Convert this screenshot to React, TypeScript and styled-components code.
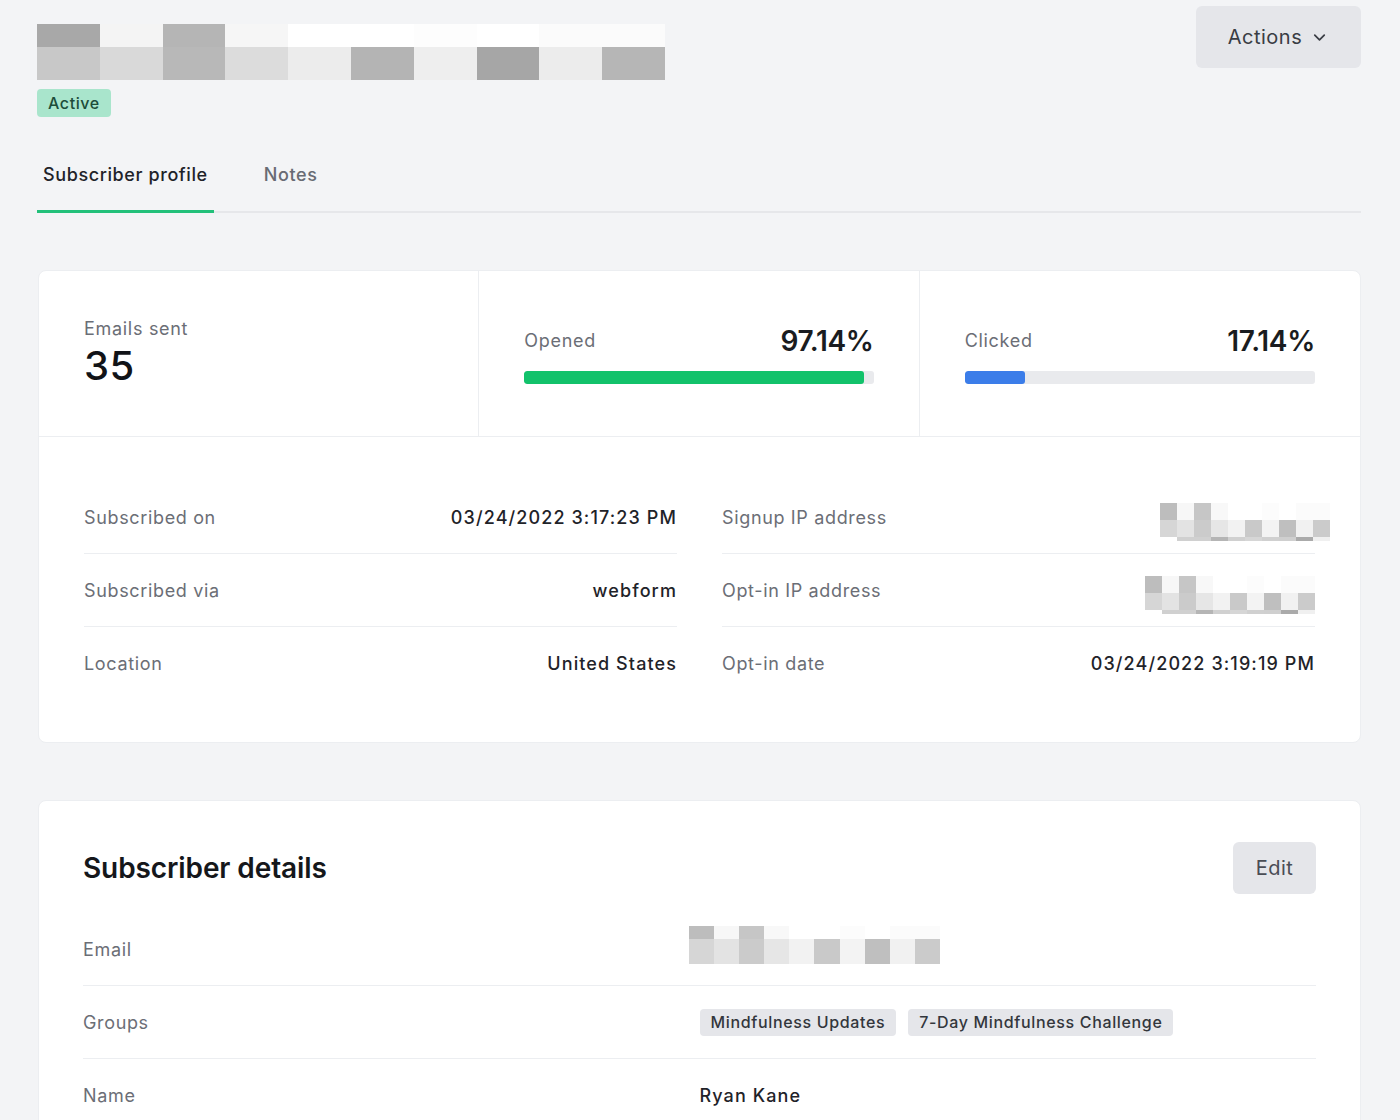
import styled, { createGlobalStyle } from 'styled-components';

const GlobalStyle = createGlobalStyle`
  html, body {
    margin: 0;
    padding: 0;
    background: #f3f4f6;
    overflow: hidden;
  }
  body {
    font-family: Inter, "Noto Sans", "Liberation Sans", sans-serif;
    color: #1f2329;
  }
  * {
    box-sizing: border-box;
  }
`;

const Page = styled.div`
  padding: 6px 39px 0 37px;
`;

const Header = styled.div`
  display: flex;
  justify-content: space-between;
  align-items: flex-start;
`;

const HeaderLeft = styled.div`
  display: flex;
  flex-direction: column;
  align-items: flex-start;
  padding-top: 18px;
`;

const PixelGrid = styled.div<{ $cols: number; $cell: number; $rows: string }>`
  display: grid;
  grid-template-columns: repeat(${(p) => p.$cols}, ${(p) => p.$cell}px);
  grid-template-rows: ${(p) => p.$rows};
`;

const Pixel = styled.div<{ $c: string }>`
  background: ${(p) => p.$c};
`;

const Badge = styled.div`
  margin-top: 9px;
  background: #a9e5cc;
  color: #1d4d3a;
  font-size: 16px;
  font-weight: 500;
  line-height: 28px;
  padding: 0 11px;
  border-radius: 4px;
  letter-spacing: 0.6px;
`;

const ActionsButton = styled.button`
  display: flex;
  align-items: center;
  gap: 8px;
  height: 62px;
  width: 165px;
  justify-content: center;
  background: #e5e6ea;
  border: none;
  border-radius: 6px;
  font-family: inherit;
  font-size: 20px;
  letter-spacing: 0.5px;
  color: #3a3d44;
  cursor: pointer;
`;

const TabBar = styled.div`
  display: flex;
  gap: 44px;
  margin-top: 33px;
  border-bottom: 2px solid #e6e7ea;
`;

const Tab = styled.div<{ $active?: boolean }>`
  padding: 14px 6px 24px;
  font-size: 18px;
  line-height: 22px;
  font-weight: 500;
  letter-spacing: 0.6px;
  color: ${(p) => (p.$active ? '#1f2329' : '#686b73')};
  border-bottom: 3px solid ${(p) => (p.$active ? '#22c07a' : 'transparent')};
  margin-bottom: -2px;
`;

const Card = styled.div<{ $top: number }>`
  margin-top: ${(p) => p.$top}px;
  margin-left: 1px;
  background: #fff;
  border-radius: 8px;
  border: 1px solid #eceef1;
`;

const StatsRow = styled.div`
  display: grid;
  grid-template-columns: repeat(3, 1fr);
  height: 166px;
  border-bottom: 1px solid #eceef1;
`;

const StatCell = styled.div`
  display: flex;
  flex-direction: column;
  justify-content: center;
  padding: 0 45px;
  border-right: 1px solid #eceef1;
  &:last-child {
    border-right: none;
  }
`;

const StatLabel = styled.div`
  font-size: 18px;
  line-height: 22px;
  letter-spacing: 0.7px;
  color: #6b6e76;
`;

const BigNumber = styled.div`
  margin-top: 3px;
  font-size: 40px;
  line-height: 46px;
  font-weight: 500;
  letter-spacing: 0.5px;
  color: #111317;
`;

const RateTop = styled.div`
  display: flex;
  justify-content: space-between;
  align-items: center;
  height: 34px;
`;

const RateValue = styled.div`
  font-size: 28px;
  font-weight: 600;
  color: #1a1c20;
  letter-spacing: -0.3px;
`;

const Track = styled.div`
  margin-top: 13px;
  height: 13px;
  background: #e9eaed;
  border-radius: 3px;
  overflow: hidden;
`;

const Fill = styled.div<{ $color: string }>`
  height: 100%;
  background: ${(p) => p.$color};
  border-radius: 3px;
`;

const InfoSection = styled.div`
  display: grid;
  grid-template-columns: 1fr 1fr;
  gap: 45px;
  padding: 44px 45px 43px;
`;

const InfoList = styled.div`
  display: flex;
  flex-direction: column;
`;

const InfoRow = styled.div`
  display: flex;
  justify-content: space-between;
  align-items: center;
  height: 73px;
  border-bottom: 1px solid #eceef1;
  &:last-child {
    border-bottom: none;
    height: 72px;
  }
`;

const Label = styled.div`
  font-size: 18px;
  letter-spacing: 0.65px;
  color: #6b6e76;
`;

const Value = styled.div`
  font-size: 18px;
  font-weight: 500;
  color: #1f2329;
  letter-spacing: 1.1px;
`;

const DetailsCard = styled(Card)`
  padding: 41px 44px 0;
  border-bottom-left-radius: 0;
  border-bottom-right-radius: 0;
  min-height: 340px;
`;

const DetailsHeader = styled.div`
  display: flex;
  justify-content: space-between;
  align-items: center;
  margin-bottom: 19px;
`;

const Heading = styled.h2`
  margin: 0;
  font-size: 28px;
  font-weight: 600;
  letter-spacing: -0.1px;
  color: #15171b;
`;

const EditButton = styled.button`
  height: 52px;
  width: 83px;
  background: #e5e6ea;
  border: none;
  border-radius: 6px;
  font-family: inherit;
  font-size: 20px;
  letter-spacing: 0.4px;
  color: #4a4d55;
`;

const DetailRow = styled.div`
  display: grid;
  grid-template-columns: 1fr 1fr;
  align-items: center;
  height: 73px;
  border-bottom: 1px solid #eceef1;
`;

const Pills = styled.div`
  display: flex;
  gap: 12px;
`;

const Pill = styled.span`
  background: #e5e6ea;
  border-radius: 4px;
  padding: 0 11px;
  line-height: 27px;
  font-size: 16px;
  font-weight: 500;
  color: #33363c;
  letter-spacing: 0.65px;
`;

type PixelProps = {
  rows: string[][];
  cell: number;
  heights: number[];
  style?: React.CSSProperties;
};

const PixelBlock = ({ rows, cell, heights, style }: PixelProps) => (
  <PixelGrid
    $cols={rows[0].length}
    $cell={cell}
    $rows={heights.map((h) => `${h}px`).join(' ')}
    style={style}
  >
    {rows.flat().map((c, i) => (
      <Pixel key={i} $c={c} />
    ))}
  </PixelGrid>
);

const nameRows = [
  ['#a8a8a8', '#f4f4f4', '#b5b5b5', '#f6f6f6', '#ffffff', '#ffffff', '#fdfdfd', '#ffffff', '#fbfbfb', '#fbfbfb'],
  ['#c8c8c8', '#d9d9d9', '#b8b8b8', '#dcdcdc', '#ececec', '#b4b4b4', '#eeeeee', '#a6a6a6', '#ececec', '#b6b6b6'],
];

const lightRows = [
  ['#bdbdbd', '#f7f7f7', '#c6c6c6', '#f8f8f8', '#ffffff', '#ffffff', '#fcfcfc', '#ffffff', '#fbfbfb', '#fbfbfb'],
  ['#d6d6d6', '#e3e3e3', '#cbcbcb', '#e6e6e6', '#f2f2f2', '#c9c9c9', '#f3f3f3', '#bfbfbf', '#f1f1f1', '#cbcbcb'],
];

const ipRows = [
  ...lightRows,
  ['#ffffff', '#d0d0d0', '#d0d0d0', '#b5b5b5', '#d0d0d0', '#d6d6d6', '#d0d0d0', '#cfcfcf', '#aaaaaa', '#f0f0f0'],
];

const Chevron = () => (
  <svg width="19" height="19" viewBox="0 0 24 24" fill="none" stroke="#3a3d44" strokeWidth="2.2" strokeLinecap="round" strokeLinejoin="round">
    <path d="m6 9 6 6 6-6" />
  </svg>
);

const App = () => {
  return (
    <Page>
      <GlobalStyle />
      <Header>
        <HeaderLeft>
          <PixelBlock rows={nameRows} cell={62.8} heights={[23, 33]} />
          <Badge>Active</Badge>
        </HeaderLeft>
        <ActionsButton>
          Actions <Chevron />
        </ActionsButton>
      </Header>

      <TabBar>
        <Tab $active>Subscriber profile</Tab>
        <Tab>Notes</Tab>
      </TabBar>

      <Card $top={57}>
        <StatsRow>
          <StatCell>
            <StatLabel>Emails sent</StatLabel>
            <BigNumber>35</BigNumber>
          </StatCell>
          <StatCell>
            <RateTop>
              <StatLabel>Opened</StatLabel>
              <RateValue>97.14%</RateValue>
            </RateTop>
            <Track>
              <Fill $color="#12c26b" style={{ width: '97.14%' }} />
            </Track>
          </StatCell>
          <StatCell>
            <RateTop>
              <StatLabel>Clicked</StatLabel>
              <RateValue>17.14%</RateValue>
            </RateTop>
            <Track>
              <Fill $color="#3b7de9" style={{ width: '17.14%' }} />
            </Track>
          </StatCell>
        </StatsRow>
        <InfoSection>
          <InfoList>
            <InfoRow>
              <Label>Subscribed on</Label>
              <Value>03/24/2022 3:17:23 PM</Value>
            </InfoRow>
            <InfoRow>
              <Label>Subscribed via</Label>
              <Value>webform</Value>
            </InfoRow>
            <InfoRow>
              <Label>Location</Label>
              <Value>United States</Value>
            </InfoRow>
          </InfoList>
          <InfoList>
            <InfoRow>
              <Label>Signup IP address</Label>
              <PixelBlock rows={ipRows} cell={17} heights={[17, 17, 4]} style={{ marginRight: -15, marginTop: 10 }} />
            </InfoRow>
            <InfoRow>
              <Label>Opt-in IP address</Label>
              <PixelBlock rows={ipRows} cell={17} heights={[17, 17, 4]} style={{ marginTop: 10 }} />
            </InfoRow>
            <InfoRow>
              <Label>Opt-in date</Label>
              <Value>03/24/2022 3:19:19 PM</Value>
            </InfoRow>
          </InfoList>
        </InfoSection>
      </Card>

      <DetailsCard $top={57}>
        <DetailsHeader>
          <Heading>Subscriber details</Heading>
          <EditButton>Edit</EditButton>
        </DetailsHeader>
        <DetailRow>
          <Label>Email</Label>
          <PixelBlock rows={lightRows} cell={25.2} heights={[13, 25]} style={{ marginLeft: -11, marginTop: -8 }} />
        </DetailRow>
        <DetailRow>
          <Label>Groups</Label>
          <Pills>
            <Pill>Mindfulness Updates</Pill>
            <Pill>7-Day Mindfulness Challenge</Pill>
          </Pills>
        </DetailRow>
        <DetailRow>
          <Label>Name</Label>
          <Value>Ryan Kane</Value>
        </DetailRow>
      </DetailsCard>
    </Page>
  );
};

export default App;
